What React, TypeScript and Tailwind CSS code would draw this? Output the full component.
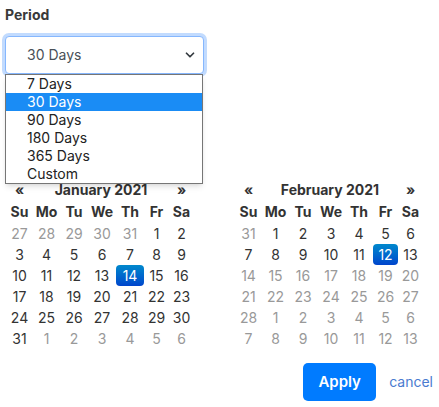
import { ChevronDown } from "lucide-react";

const jan = [
  [27, 28, 29, 30, 31, 1, 2],
  [3, 4, 5, 6, 7, 8, 9],
  [10, 11, 12, 13, 14, 15, 16],
  [17, 18, 19, 20, 21, 22, 23],
  [24, 25, 26, 27, 28, 29, 30],
  [31, 1, 2, 3, 4, 5, 6],
];

const feb = [
  [31, 1, 2, 3, 4, 5, 6],
  [7, 8, 9, 10, 11, 12, 13],
  [14, 15, 16, 17, 18, 19, 20],
  [21, 22, 23, 24, 25, 26, 27],
  [28, 1, 2, 3, 4, 5, 6],
  [7, 8, 9, 10, 11, 12, 13],
];

const days = ["Su", "Mo", "Tu", "We", "Th", "Fr", "Sa"];
const options = ["7 Days", "30 Days", "90 Days", "180 Days", "365 Days", "Custom"];

type CalProps = {
  title: string;
  weeks: number[][];
  active: [number, number];
  // greyed out cells (other month / past the max date)
  muted: (row: number, col: number) => boolean;
};

function Calendar({ title, weeks, active, muted }: CalProps) {
  return (
    <div className="grid w-[188px] grid-cols-[27px_27px_28px_28px_28px_25px_25px] text-sm text-[#333]">
      <div className="flex h-[22px] items-center justify-center font-bold">«</div>
      <div className="col-span-5 flex h-[22px] items-center justify-center font-bold">
        {title}
      </div>
      <div className="flex h-[22px] items-center justify-center font-bold">»</div>
      {days.map((d) => (
        <div key={d} className="flex h-[22px] items-center justify-center font-bold">
          {d}
        </div>
      ))}
      {weeks.map((week, r) =>
        week.map((n, c) => {
          const isActive = active[0] === r && active[1] === c;
          return (
            <div
              key={`${r}-${c}`}
              className={
                isActive
                  ? "flex h-[21px] items-center justify-center rounded bg-gradient-to-b from-[#0088cc] to-[#0044cc] text-white"
                  : muted(r, c)
                  ? "flex h-[21px] items-center justify-center text-[#999]"
                  : "flex h-[21px] items-center justify-center"
              }
            >
              {n}
            </div>
          );
        })
      )}
    </div>
  );
}

export default function App() {
  return (
    <div
      className="relative h-[407px] w-[439px] overflow-hidden bg-white pl-[5px] pr-[6px] pt-[7px]"
      style={{ fontFamily: "Inter, 'Noto Sans', sans-serif" }}
    >
      <div className="text-sm font-bold leading-4 text-[#3a3a3a]">Period</div>

      <div className="relative mt-[13px] w-[199px]">
        <div className="flex h-[38px] items-center justify-between rounded border border-[#86b7fe] bg-white pl-[21px] pr-[6px] text-sm text-[#495057] shadow-[0_0_0_3px_rgba(13,110,253,0.25)]">
          <span>30 Days</span>
          <ChevronDown size={14} strokeWidth={3} className="text-[#343a40]" />
        </div>
        <div className="absolute left-0 top-[38px] z-10 w-[198px] border border-[#767676] bg-white shadow-md">
          {options.map((o) => (
            <div
              key={o}
              className={
                o === "30 Days"
                  ? "h-[18px] bg-[#1a8cf5] pl-[21px] text-sm leading-[18px] text-white"
                  : "h-[18px] pl-[21px] text-sm leading-[18px] text-[#222]"
              }
            >
              {o}
            </div>
          ))}
        </div>
      </div>

      <div className="ml-px mt-[105px] flex gap-[41px]">
        <Calendar
          title="January 2021"
          weeks={jan}
          active={[2, 4]}
          muted={(r, c) => (r === 0 && c < 5) || (r === 5 && c > 0)}
        />
        <Calendar
          title="February 2021"
          weeks={feb}
          active={[1, 5]}
          muted={(r, c) => (r === 0 ? c === 0 : r >= 2)}
        />
      </div>

      <div className="mt-[14px] flex items-center justify-end gap-[13px]">
        <button className="h-[38px] w-[73px] rounded-[5px] bg-[#007bff] text-[15px] font-semibold text-white">
          Apply
        </button>
        <a className="text-sm text-[#4a7bd0]">cancel</a>
      </div>
    </div>
  );
}
